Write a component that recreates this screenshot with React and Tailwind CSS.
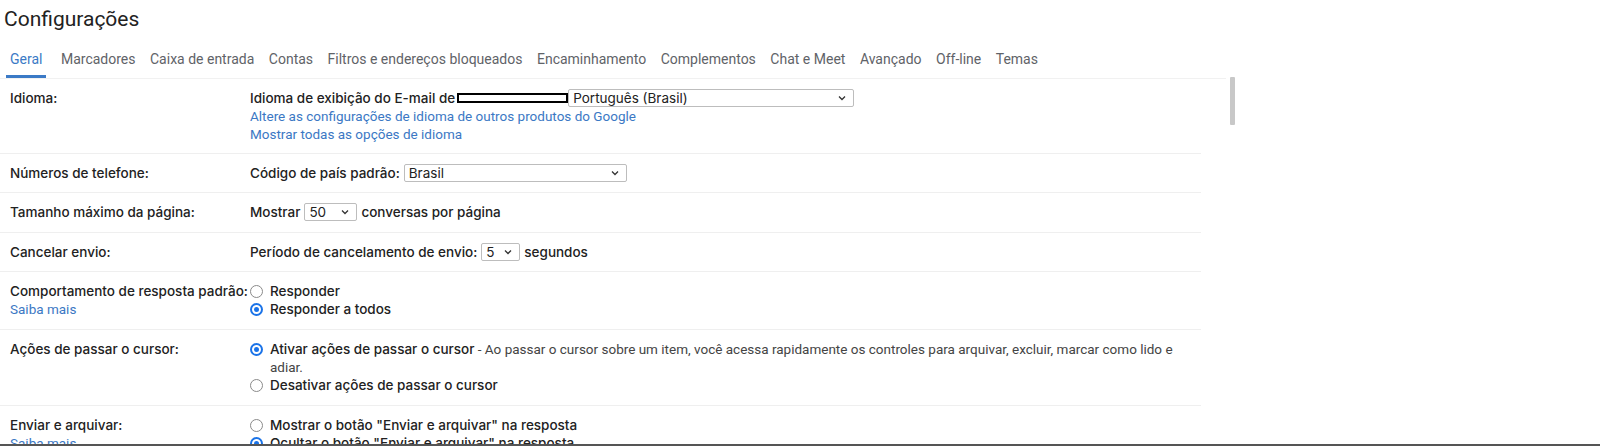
const tabs = [
  'Geral',
  'Marcadores',
  'Caixa de entrada',
  'Contas',
  'Filtros e endereços bloqueados',
  'Encaminhamento',
  'Complementos',
  'Chat e Meet',
  'Avançado',
  'Off-line',
  'Temas',
];

const roboto = { fontFamily: 'Roboto, sans-serif' };

function Chevron() {
  return (
    <svg width="10" height="10" viewBox="0 0 10 10" className="shrink-0">
      <path d="M2 3.5 L5 6.5 L8 3.5" fill="none" stroke="#333" strokeWidth="1.3" />
    </svg>
  );
}

function Select({ value, width }) {
  return (
    <div
      className={`inline-flex items-center justify-between h-[18px] border border-[#bdbdbd] rounded-[2px] bg-white pl-[4px] pr-[6px] font-normal text-[#222] ${width}`}
    >
      <span>{value}</span>
      <Chevron />
    </div>
  );
}

function Radio({ checked }) {
  if (checked) {
    return (
      <span className="inline-flex items-center justify-center w-[13px] h-[13px] rounded-full bg-[#1a73e8] shrink-0">
        <span className="w-[9px] h-[9px] rounded-full bg-[#1a73e8] border-[2px] border-white" />
      </span>
    );
  }
  return <span className="inline-block w-[13px] h-[13px] rounded-full border border-[#8a8a8a] bg-white shrink-0" />;
}

function Row({ label, sub, extra = '', children }) {
  return (
    <div className={`flex border-b border-[#efefef] pt-[10px] pb-[10px] leading-[18px] ${extra}`}>
      <div className="w-[250px] pl-[10px] shrink-0">
        <div className="font-medium text-[#222]">{label}</div>
        {sub && <div className="text-[#3b78c4]" style={roboto}>{sub}</div>}
      </div>
      <div className="flex-1 min-w-0">{children}</div>
    </div>
  );
}

export default function App() {
  return (
    <div className="relative w-[1600px] h-[447px] overflow-hidden bg-white text-[13.5px]" style={{ fontFamily: 'Inter, "Noto Sans", sans-serif' }}>
      <h1 className="pl-[4px] pt-[5px] text-[21px] leading-[28px] text-[#222] font-normal" style={roboto}>
        Configurações
      </h1>

      <div className="flex">
        <div className="w-[1226px]">
          <div className="flex gap-[14.5px] pl-[10px] mt-[17px] text-[14px] border-b border-[#f1f1f1]" style={roboto}>
            {tabs.map((t, i) => (
              <div
                key={t}
                className={`pb-[7px] leading-[18px] ${i === 0 ? 'text-[#3b7ac6] border-b-[3px] border-[#3b7ac6] -ml-[4px] px-[4px]' : 'text-[#5f6368] border-b-[3px] border-transparent'}`}
              >
                {t}
              </div>
            ))}
          </div>

          <div className="w-[1201px]">
            <Row label="Idioma:">
              <div className="flex items-center font-medium text-[#222]">
                <span>Idioma de exibição do E-mail de</span>
                <span className="inline-block w-[111px] h-[10px] border-[2px] border-black bg-white ml-[2px]" />
                <Select value="Português (Brasil)" width="w-[286px]" />
              </div>
              <div style={roboto}>
                <div className="text-[#3b78c4]">Altere as configurações de idioma de outros produtos do Google</div>
                <div className="text-[#3b78c4]">Mostrar todas as opções de idioma</div>
              </div>
            </Row>

            <Row label="Números de telefone:">
              <div className="flex items-center gap-[4px] font-medium text-[#222]">
                <span>Código de país padrão:</span>
                <Select value="Brasil" width="w-[223px]" />
              </div>
            </Row>

            <Row label="Tamanho máximo da página:" extra="pb-[11px]">
              <div className="flex items-center gap-[4px] font-medium text-[#222]">
                <span>Mostrar</span>
                <Select value="50" width="w-[53px]" />
                <span>conversas por página</span>
              </div>
            </Row>

            <Row label="Cancelar envio:">
              <div className="flex items-center gap-[4px] font-medium text-[#222]">
                <span>Período de cancelamento de envio:</span>
                <Select value="5" width="w-[39px]" />
                <span>segundos</span>
              </div>
            </Row>

            <Row label="Comportamento de resposta padrão:" sub="Saiba mais" extra="pb-[11px]">
              <div className="font-medium text-[#222]">
                <div className="flex items-center gap-[7px]">
                  <Radio />
                  <span>Responder</span>
                </div>
                <div className="flex items-center gap-[7px]">
                  <Radio checked />
                  <span>Responder a todos</span>
                </div>
              </div>
            </Row>

            <Row label="Ações de passar o cursor:" extra="leading-[18.5px] pb-[11px]">
              <div className="text-[#222]">
                <div className="flex items-center gap-[7px]">
                  <Radio checked />
                  <span>
                    <span className="font-medium">Ativar ações de passar o cursor</span>
                    <span className="text-[#444]" style={roboto}> - Ao passar o cursor sobre um item, você acessa rapidamente os controles para arquivar, excluir, marcar como lido e</span>
                  </span>
                </div>
                <div className="pl-[20px] text-[#444]" style={roboto}>adiar.</div>
                <div className="flex items-center gap-[7px] font-medium">
                  <Radio />
                  <span>Desativar ações de passar o cursor</span>
                </div>
              </div>
            </Row>

            <Row label="Enviar e arquivar:" sub="Saiba mais">
              <div className="text-[#222] font-medium">
                <div className="flex items-center gap-[7px]">
                  <Radio />
                  <span>Mostrar o botão "Enviar e arquivar" na resposta</span>
                </div>
                <div className="flex items-center gap-[7px]">
                  <Radio checked />
                  <span>Ocultar o botão "Enviar e arquivar" na resposta</span>
                </div>
              </div>
            </Row>
          </div>
        </div>

        <div className="pt-[44px] pl-[4px]">
          <div className="w-[5px] h-[48px] bg-[#c8c8c8] rounded-[1px]" />
        </div>
      </div>

      <div className="absolute left-0 right-0 top-[444px] h-[3px] bg-white border-t-[2px] border-[#555]" />
    </div>
  );
}
